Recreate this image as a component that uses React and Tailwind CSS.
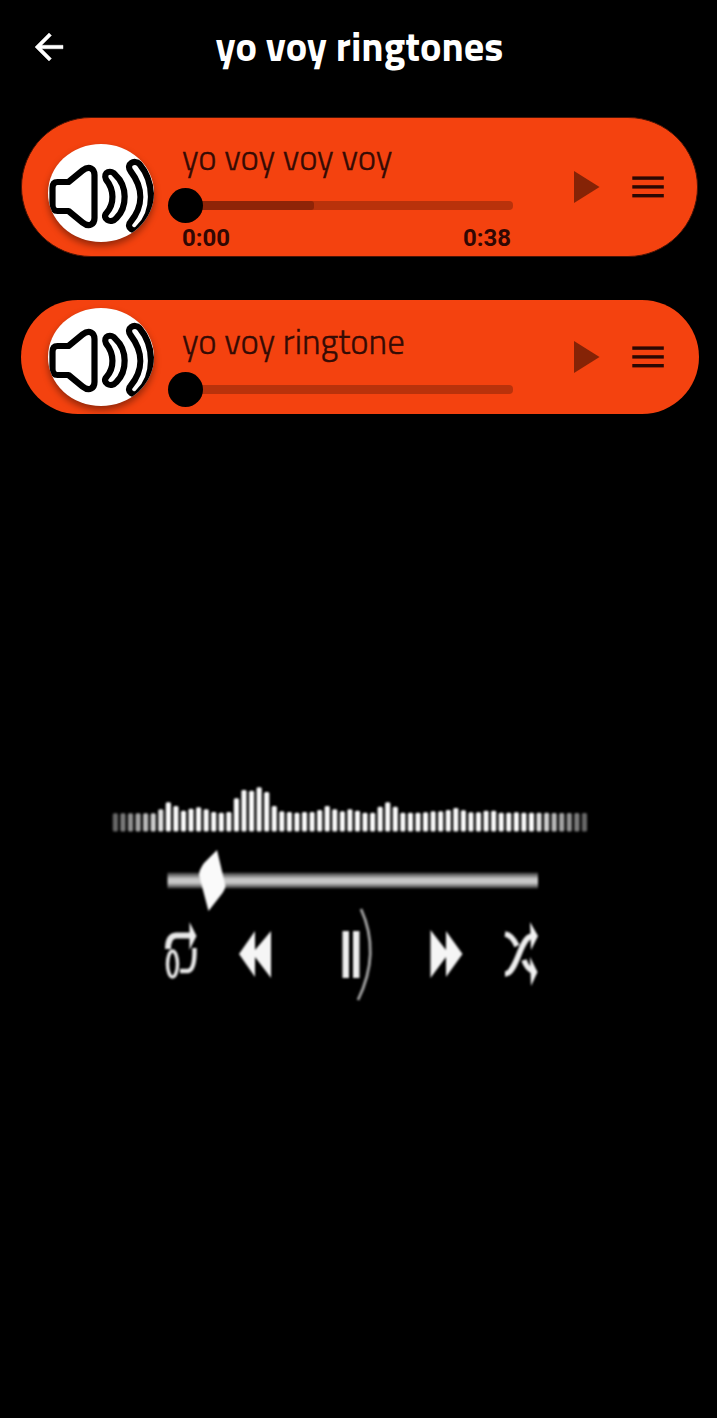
const songs = [
  { title: "yo voy voy voy", elapsed: "0:00", total: "0:38", buffered: 39.6 },
  { title: "yo voy ringtone", buffered: 0 },
];

// top edge of every bar, on a 0..80 scale
const levels = [
  130, 130, 130, 130, 130, 130, 118, 97, 108, 122, 116, 112, 118, 126, 128, 126,
  85, 60, 62, 52, 66, 108, 124, 126, 128, 126, 126, 120, 108, 118, 124, 118,
  122, 128, 128, 110, 97, 110, 128, 128, 128, 127, 124, 124, 120, 114, 121, 127,
  127, 122, 122, 128, 128, 127, 128, 128, 128, 128, 129, 129, 129, 129, 129,
].map((v) => v / 3);

const barOpacity = (i) => {
  const edge = Math.min(i, levels.length - 1 - i);
  return edge < 7 ? 0.4 + edge * 0.08 : 0.98;
};

function SpeakerIcon() {
  return (
    <svg viewBox="0 0 105 98" className="block h-full w-full" fill="none" stroke="#000" strokeWidth="6.2" strokeLinejoin="round" strokeLinecap="round">
      <path d="M4 44 Q4 38 9 38 H20 L34 26.500 C41 21 46 25 46 31 V74 C46 80 41 84 34 78.500 L20 67 H9 Q4 67 4 61 Z" />
      <path d="M57.500 35.500 C54 28 63 25 67 31 C79 42 79 63 68 74 C62 81 53 74 58 69 C66 60 66 46 57.500 35.500 Z" />
      <path d="M82 27 C77 20 86 15 91 20 C106 38 107 68 90 84 C86 90 77 83 82 78 C95 62 95 44 82 27 Z" />
    </svg>
  );
}

function Slider({ buffered }) {
  return (
    <div className="relative flex h-[35px] w-[345px] shrink-0 items-center">
      <div className="ml-4 h-[9px] flex-1 overflow-hidden rounded-r-[4px] bg-[#b9320b]">
        <div className="h-full rounded-r-[3px] bg-[#8f2407]" style={{ width: `${buffered}%` }} />
      </div>
      <div className="absolute left-0 top-0 size-[35px] rounded-full bg-black" />
    </div>
  );
}

function SongCard({ song }) {
  const open = Boolean(song.total);
  return (
    <div className={`flex items-center bg-[#f4420f] ${open ? "ml-[21px] mr-[19px] h-[140px] rounded-[70px] border border-[#4a1405] pl-[26px]" : "ml-[21px] mr-[18px] h-[114px] rounded-[57px] pl-[27px]"}`}>
      <div className={`h-[98px] w-[106px] shrink-0 overflow-hidden rounded-[50%] bg-white shadow-[0_4px_7px_rgba(0,0,0,0.4)] ${open ? "mt-[12px]" : ""}`}>
        <SpeakerIcon />
      </div>

      <div className={`ml-[14px] flex h-full w-[345px] shrink-0 flex-col ${open ? "pt-[20px]" : "pt-[22px]"}`}>
        <div className="h-[50px] shrink-0 whitespace-nowrap pl-[14px] font-['Titillium_Web','Open_Sans',sans-serif] text-[34.800px] font-light leading-[40px] text-[#350b04] [-webkit-text-stroke:0.4px_#350b04]">
          {song.title}
        </div>
        <Slider buffered={song.buffered} />
        {open && (
          <div className="flex justify-between pl-[14px] pr-[2px] font-[Roboto,sans-serif] text-[24px] font-bold leading-[30px] text-[#300703]">
            <span>{song.elapsed}</span>
            <span>{song.total}</span>
          </div>
        )}
      </div>

      <button type="button" className={`ml-[61px] ${open ? "mb-[1px]" : ""}`} aria-label="Play">
        <svg viewBox="0 0 26 32" className="block h-[32px] w-[26px]">
          <path d="M0 0 L25.5 16 L0 32 Z" fill="#852306" />
        </svg>
      </button>
      <button type="button" className={`ml-[32px] ${open ? "mb-[1px]" : ""}`} aria-label="Menu">
        <svg viewBox="0 0 32 22" className="block h-[22px] w-[32px]" fill="#2a0803">
          <rect x="0.3" y="0.4" width="31.500" height="3.400" />
          <rect x="0.3" y="9.200" width="31.500" height="3.400" />
          <rect x="0.3" y="18" width="31.500" height="3.400" />
        </svg>
      </button>
    </div>
  );
}

function Equalizer() {
  return (
    <svg viewBox="100 0 500 80" className="block h-[80px] w-[500px] blur-[0.8px]">
      {levels.map((top, i) => (
        <rect key={i} x={112.8 + i * 7.565} y={top} width="5.200" height={61.5 - top} rx="1.5" fill="#fff" opacity={barOpacity(i)} />
      ))}
    </svg>
  );
}

function PlayerControls() {
  return (
    <svg viewBox="150 840 410 170" className="ml-[50px] block h-[170px] w-[410px] blur-[0.8px]">
      <defs>
        <linearGradient id="track" x1="0" y1="0" x2="0" y2="1">
          <stop offset="0" stopColor="#333" />
          <stop offset="0.4" stopColor="#c8c8c8" />
          <stop offset="0.65" stopColor="#c8c8c8" />
          <stop offset="1" stopColor="#333" />
        </linearGradient>
      </defs>
      <rect x="167.5" y="872.5" width="370.5" height="16" fill="url(#track)" />
      <path d="M217 850 L225.5 886 Q225 890 221 895 L208.500 911 L199 875 Q199 870 204 863 Z" fill="#fafafa" />

      {/* repeat */}
      <g fill="none" stroke="#e8e8e8">
        <path d="M168 949 Q168 936 176 935.500 H191" strokeWidth="6" />
        <path d="M194.500 948 Q195 970 188 971 H180" strokeWidth="4.500" />
        <ellipse cx="172.500" cy="964" rx="5" ry="13" strokeWidth="3.500" />
      </g>
      <path d="M189.500 922 L196.500 936 L189.500 950 Z" fill="#eee" />

      {/* previous */}
      <path d="M239 954 L255 931 V950 L271 931 V978 L255 957 V977 Z" fill="#f5f5f5" />

      {/* pause */}
      <rect x="342.500" y="931" width="6.500" height="47" fill="#eee" />
      <rect x="353" y="931" width="6.500" height="47" fill="#eee" />
      <path d="M361 909 Q381 953 358 1000" fill="none" stroke="#a5a5a5" strokeWidth="2.800" />

      {/* next */}
      <path d="M430.500 930 L446 950 V931 L462.500 954 L446 977 V957 L430.500 978 Z" fill="#f5f5f5" />

      {/* shuffle */}
      <g fill="none" stroke="#eee" strokeWidth="5.5">
        <path d="M505 934 Q512 935 517 946" />
        <path d="M505 974 C517 974 520 937 532 936" />
        <path d="M524 960 Q527 969 533 971" />
      </g>
      <path d="M530 922 L538 936 L531 950 Z M530 957 L537.500 972 L531 986 Z" fill="#f2f2f2" />
    </svg>
  );
}

export default function App() {
  return (
    <div className="flex h-[1418px] w-[717px] flex-col overflow-hidden bg-black">
      <header className="grid h-[93px] shrink-0 grid-cols-[42px_1fr_42px] items-center px-[28px]">
        <button type="button" aria-label="Back">
          <svg viewBox="0 0 24 24" className="block size-[42px]" fill="#fff" stroke="#fff" strokeWidth="0.25">
            <path d="M20 11H7.830l5.590-5.590L12 4l-8 8 8 8 1.410-1.410L7.830 13H20v-2z" />
          </svg>
        </button>
        <h1 className="whitespace-nowrap pl-[2px] text-center font-['Titillium_Web','Open_Sans',sans-serif] text-[40.400px] font-bold text-white">
          yo voy ringtones
        </h1>
      </header>

      <main className="flex flex-col pt-[24px]">
        <div className="flex flex-col gap-[43px]">
          {songs.map((song) => <SongCard key={song.title} song={song} />)}
        </div>
        <div className="flex flex-col pl-[100px] pt-[356px]">
          <Equalizer />
          <div className="-mt-[10px]">
            <PlayerControls />
          </div>
        </div>
      </main>
    </div>
  );
}
